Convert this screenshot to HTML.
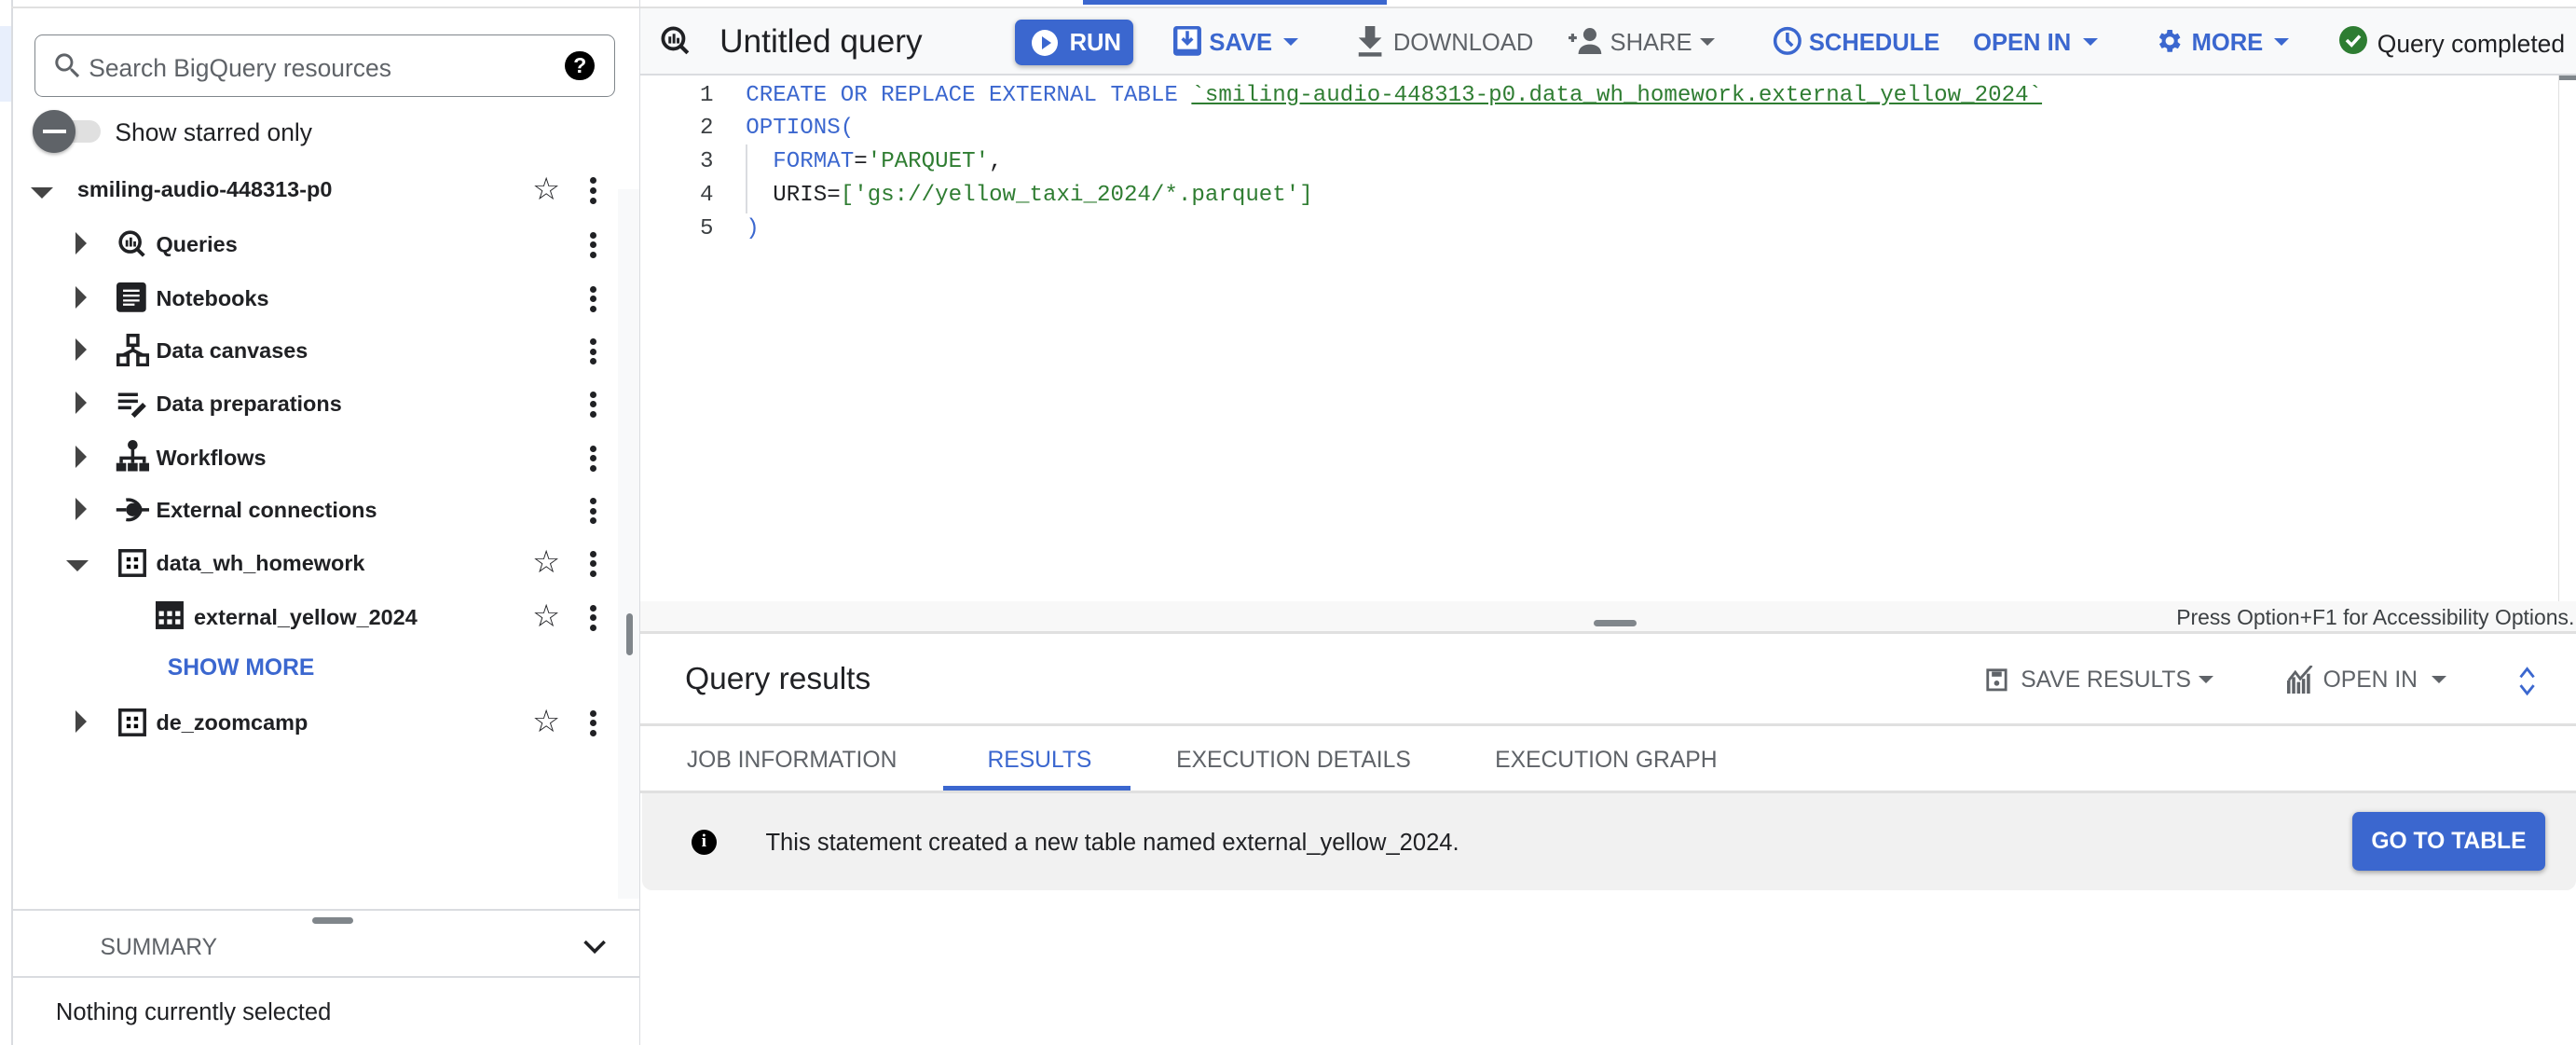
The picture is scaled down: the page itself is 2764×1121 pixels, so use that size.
<!DOCTYPE html>
<html><head><meta charset="utf-8"><style>
html,body{margin:0;padding:0;background:#fff;overflow:hidden}
#w{zoom:1.7628;width:1568px;height:636px;position:relative;font-family:"Liberation Sans",Arial,sans-serif;color:#202124}
.a{position:absolute}
.row{position:absolute;left:0;width:376px;height:32px}
.row .t{position:absolute;top:9px;font-size:13.3px;font-weight:bold;color:#202124;white-space:nowrap}
.dots{position:absolute;left:359px;top:9px;width:4px}
.dots i{display:block;width:4px;height:4px;border-radius:2px;background:#202124;margin-bottom:2px}
.tri{position:absolute;width:0;height:0}
.star{position:absolute;left:324px;top:7px;font-size:19px;line-height:19px;color:#202124}
.tb{position:absolute;top:18px;font-size:14.5px;white-space:nowrap}
.code{font-family:"Liberation Mono",monospace;font-size:13.7px;position:absolute;left:454px;white-space:pre;line-height:20.3px}
.ln{font-family:"Liberation Mono",monospace;font-size:13.7px;position:absolute;left:426px;color:#3c4043;line-height:20.3px}
.k{color:#3b67cf}.s{color:#2f7d32}
</style></head><body><div id="w">
<div class="a" style="left:0;top:0;width:7px;height:636px;background:#fff"></div>
<div class="a" style="left:0;top:16px;width:7px;height:46px;background:#e8effc"></div>
<div class="a" style="left:7px;top:0;width:1px;height:636px;background:#dadce0"></div>
<div class="a" style="left:7px;top:4px;width:1561px;height:1px;background:#e0e0e0"></div>
<div class="a" style="left:389px;top:0;width:1px;height:636px;background:#dadce0"></div>
<div class="a" style="left:376px;top:115px;width:13px;height:432px;background:#f8f9fa"></div>
<div class="a" style="left:381px;top:373px;width:4px;height:26px;border-radius:2px;background:#80868b"></div>

<div class="a" style="left:21px;top:21px;width:352px;height:37px;border:1px solid #80868b;border-radius:5px"></div>
<svg class="a" style="left:31px;top:30px" width="20" height="20" viewBox="0 0 24 24"><path fill="#5f6368" d="M15.5 14h-.8l-.3-.3A6.5 6.5 0 1 0 9.5 16a6.5 6.5 0 0 0 4.2-1.6l.3.3v.8l5 5 1.5-1.5-5-5zm-6 0A4.5 4.5 0 1 1 14 9.5 4.5 4.5 0 0 1 9.5 14z"/></svg>
<div class="a" style="left:54px;top:33px;font-size:15px;color:#5f6368">Search BigQuery resources</div>
<div class="a" style="left:344px;top:31px;width:18px;height:18px;border-radius:9px;background:#000;color:#fff;font-size:13px;font-weight:bold;text-align:center;line-height:18px">?</div>

<div class="a" style="left:29px;top:73px;width:32px;height:14px;border-radius:7px;background:#e0e0e0"></div>
<div class="a" style="left:20px;top:67px;width:26px;height:26px;border-radius:13px;background:#5f6368;box-shadow:0 1px 2px rgba(0,0,0,.3)"></div>
<div class="a" style="left:26px;top:79px;width:14px;height:2px;background:#fff"></div>
<div class="a" style="left:70px;top:72px;font-size:15px;color:#202124">Show starred only</div>

<div class="row" style="top:99px"><div class="tri" style="left:19px;top:15px;border-left:7px solid transparent;border-right:7px solid transparent;border-top:7px solid #444"></div><div class="t" style="left:47px">smiling-audio-448313-p0</div><div class="star">☆</div><div class="dots"><i></i><i></i><i></i></div></div>

<div class="row" style="top:132px"><div class="tri" style="left:46px;top:9px;border-top:7px solid transparent;border-bottom:7px solid transparent;border-left:7px solid #444"></div>
<svg class="a" style="left:71px;top:7px" width="19" height="19" viewBox="0 0 24 24"><circle cx="10.5" cy="10.5" r="7.5" fill="none" stroke="#202124" stroke-width="2.6"/><path d="M16 16l5 5" stroke="#202124" stroke-width="2.8"/><rect x="7" y="9" width="2" height="5" fill="#202124"/><rect x="10" y="7" width="2" height="7" fill="#202124"/><rect x="13" y="10" width="2" height="4" fill="#202124"/></svg>
<div class="t" style="left:95px">Queries</div><div class="dots"><i></i><i></i><i></i></div></div>

<div class="row" style="top:165px"><div class="tri" style="left:46px;top:9px;border-top:7px solid transparent;border-bottom:7px solid transparent;border-left:7px solid #444"></div>
<svg class="a" style="left:71px;top:7px" width="18" height="18" viewBox="0 0 18 18"><rect x="0" y="0" width="18" height="18" rx="2" fill="#202124"/><path d="M4 5h10M4 8h10M4 11h10M4 13.5h7" stroke="#fff" stroke-width="1.3"/></svg>
<div class="t" style="left:95px">Notebooks</div><div class="dots"><i></i><i></i><i></i></div></div>

<div class="row" style="top:197px"><div class="tri" style="left:46px;top:9px;border-top:7px solid transparent;border-bottom:7px solid transparent;border-left:7px solid #444"></div>
<svg class="a" style="left:71px;top:6px" width="20" height="20" viewBox="0 0 20 20" fill="none" stroke="#202124" stroke-width="2"><rect x="7" y="1" width="6" height="6"/><rect x="1" y="13" width="6" height="6"/><rect x="13" y="13" width="6" height="6"/><path d="M10 7v3l-6 3M10 10l6 3"/></svg>
<div class="t" style="left:95px">Data canvases</div><div class="dots"><i></i><i></i><i></i></div></div>

<div class="row" style="top:229px"><div class="tri" style="left:46px;top:9px;border-top:7px solid transparent;border-bottom:7px solid transparent;border-left:7px solid #444"></div>
<svg class="a" style="left:71px;top:8px" width="20" height="18" viewBox="0 0 20 18"><path d="M1 3h12M1 7h12M1 11h8" stroke="#202124" stroke-width="2"/><path d="M10 16l7-7" stroke="#202124" stroke-width="3"/></svg>
<div class="t" style="left:95px">Data preparations</div><div class="dots"><i></i><i></i><i></i></div></div>

<div class="row" style="top:262px"><div class="tri" style="left:46px;top:9px;border-top:7px solid transparent;border-bottom:7px solid transparent;border-left:7px solid #444"></div>
<svg class="a" style="left:70px;top:6px" width="22" height="20" viewBox="0 0 22 20"><circle cx="11" cy="3" r="3" fill="#202124"/><path d="M11 5v6M4 14v-3h14v3M11 11v3" stroke="#202124" stroke-width="2" fill="none"/><rect x="1" y="14" width="6" height="5" fill="#202124"/><rect x="8" y="14" width="6" height="5" fill="#202124"/><rect x="15" y="14" width="6" height="5" fill="#202124"/></svg>
<div class="t" style="left:95px">Workflows</div><div class="dots"><i></i><i></i><i></i></div></div>

<div class="row" style="top:294px"><div class="tri" style="left:46px;top:9px;border-top:7px solid transparent;border-bottom:7px solid transparent;border-left:7px solid #444"></div>
<svg class="a" style="left:70px;top:7px" width="22" height="18" viewBox="0 0 22 18"><path d="M1 9h6M15 9h6" stroke="#202124" stroke-width="2"/><circle cx="11" cy="9" r="4" fill="#202124"/><path d="M7 3a8 8 0 0 1 9 6a8 8 0 0 1-9 6" stroke="#202124" stroke-width="2" fill="none"/></svg>
<div class="t" style="left:95px">External connections</div><div class="dots"><i></i><i></i><i></i></div></div>

<div class="row" style="top:326px"><div class="tri" style="left:40px;top:15px;border-left:7px solid transparent;border-right:7px solid transparent;border-top:7px solid #444"></div>
<svg class="a" style="left:72px;top:8px" width="17" height="17" viewBox="0 0 17 17"><rect x="1" y="1" width="15" height="15" fill="none" stroke="#202124" stroke-width="2"/><rect x="5" y="5" width="2.5" height="2.5"/><rect x="9.5" y="5" width="2.5" height="2.5"/><rect x="5" y="9.5" width="2.5" height="2.5"/><rect x="9.5" y="9.5" width="2.5" height="2.5"/></svg>
<div class="t" style="left:95px">data_wh_homework</div><div class="star">☆</div><div class="dots"><i></i><i></i><i></i></div></div>

<div class="row" style="top:359px">
<svg class="a" style="left:95px;top:7px" width="17" height="17" viewBox="0 0 17 17"><rect x="0" y="0" width="17" height="17" fill="#202124"/><g fill="#fff"><rect x="2" y="6" width="3" height="3"/><rect x="7" y="6" width="3" height="3"/><rect x="12" y="6" width="3" height="3"/><rect x="2" y="11" width="3" height="3"/><rect x="7" y="11" width="3" height="3"/><rect x="12" y="11" width="3" height="3"/></g></svg>
<div class="t" style="left:118px">external_yellow_2024</div><div class="star">☆</div><div class="dots"><i></i><i></i><i></i></div></div>

<div class="a" style="left:102px;top:399px;font-size:14px;font-weight:bold;color:#3b67cf">SHOW MORE</div>

<div class="row" style="top:423px"><div class="tri" style="left:46px;top:9px;border-top:7px solid transparent;border-bottom:7px solid transparent;border-left:7px solid #444"></div>
<svg class="a" style="left:72px;top:8px" width="17" height="17" viewBox="0 0 17 17"><rect x="1" y="1" width="15" height="15" fill="none" stroke="#202124" stroke-width="2"/><rect x="5" y="5" width="2.5" height="2.5"/><rect x="9.5" y="5" width="2.5" height="2.5"/><rect x="5" y="9.5" width="2.5" height="2.5"/><rect x="9.5" y="9.5" width="2.5" height="2.5"/></svg>
<div class="t" style="left:95px">de_zoomcamp</div><div class="star">☆</div><div class="dots"><i></i><i></i><i></i></div></div>

<div class="a" style="left:8px;top:553px;width:381px;height:1px;background:#dadce0"></div>
<div class="a" style="left:190px;top:558px;width:25px;height:4px;border-radius:2px;background:#80868b"></div>
<div class="a" style="left:61px;top:569px;font-size:14px;color:#5f6368">SUMMARY</div>
<svg class="a" style="left:354px;top:569px" width="16" height="14" viewBox="0 0 16 14"><path d="M2 4l6 6 6-6" stroke="#202124" stroke-width="2" fill="none"/></svg>
<div class="a" style="left:8px;top:594px;width:381px;height:1px;background:#dadce0"></div>
<div class="a" style="left:34px;top:608px;font-size:14.5px;color:#202124">Nothing currently selected</div>

<div class="a" style="left:390px;top:5px;width:1178px;height:40px;background:#f8f9fa"></div>
<div class="a" style="left:659px;top:0;width:185px;height:3px;background:#3b67cf"></div>
<div class="a" style="left:390px;top:45px;width:1178px;height:1px;background:#dadce0"></div>
<svg class="a" style="left:401px;top:15px" width="20" height="20" viewBox="0 0 24 24"><circle cx="10.5" cy="10.5" r="7.5" fill="none" stroke="#202124" stroke-width="2.6"/><path d="M16 16l5 5" stroke="#202124" stroke-width="2.8"/><rect x="7" y="9" width="2" height="5" fill="#202124"/><rect x="10" y="7" width="2" height="7" fill="#202124"/><rect x="13" y="10" width="2" height="4" fill="#202124"/></svg>
<div class="a" style="left:438px;top:14px;font-size:20px;color:#202124">Untitled query</div>
<div class="a" style="left:618px;top:12px;width:72px;height:28px;border-radius:4px;background:#3b67cf;box-shadow:0 1px 3px rgba(0,0,0,.3)"></div>
<div class="a" style="left:628px;top:18px;width:16px;height:16px;border-radius:8px;background:#fff"></div>
<div class="a" style="left:634px;top:22px;border-top:4px solid transparent;border-bottom:4px solid transparent;border-left:6px solid #3b67cf"></div>
<div class="tb" style="left:651px;color:#fff;font-weight:bold">RUN</div>
<svg class="a" style="left:714px;top:16px" width="17" height="18" viewBox="0 0 17 18"><rect x="0" y="0" width="17" height="18" rx="2" fill="#3b67cf"/><rect x="2.5" y="2" width="12" height="12" fill="#fff"/><path d="M8.5 3v7M5.5 7.5l3 3 3-3" stroke="#3b67cf" stroke-width="2" fill="none"/></svg>
<div class="tb" style="left:736px;color:#3b67cf;font-weight:bold">SAVE</div>
<div class="a" style="left:781px;top:23px;border-left:5px solid transparent;border-right:5px solid transparent;border-top:5px solid #3b67cf"></div>
<svg class="a" style="left:826px;top:16px" width="16" height="19" viewBox="0 0 16 19"><path d="M5 0h6v7h4l-7 7-7-7h4z" fill="#5f6368"/><rect x="1" y="16" width="14" height="2.5" fill="#5f6368"/></svg>
<div class="tb" style="left:848px;color:#5f6368">DOWNLOAD</div>
<svg class="a" style="left:955px;top:17px" width="20" height="16" viewBox="0 0 20 16"><path d="M0 6h5M2.5 3.5v5" stroke="#5f6368" stroke-width="1.8"/><circle cx="13" cy="4" r="4" fill="#5f6368"/><path d="M6 16c0-4 3-6 7-6s7 2 7 6z" fill="#5f6368"/></svg>
<div class="tb" style="left:980px;color:#5f6368">SHARE</div>
<div class="a" style="left:1035px;top:23px;border-left:5px solid transparent;border-right:5px solid transparent;border-top:5px solid #5f6368"></div>
<svg class="a" style="left:1079px;top:16px" width="18" height="18" viewBox="0 0 18 18"><circle cx="9" cy="9" r="7.5" fill="none" stroke="#3b67cf" stroke-width="2"/><path d="M9 4v5l3 3" stroke="#3b67cf" stroke-width="2" fill="none"/></svg>
<div class="tb" style="left:1101px;color:#3b67cf;font-weight:bold">SCHEDULE</div>
<div class="tb" style="left:1201px;color:#3b67cf;font-weight:bold">OPEN IN</div>
<div class="a" style="left:1268px;top:23px;border-left:5px solid transparent;border-right:5px solid transparent;border-top:5px solid #3b67cf"></div>
<svg class="a" style="left:1311px;top:16px" width="18" height="18" viewBox="0 0 24 24"><path fill="#3b67cf" d="M19.4 13a7.5 7.5 0 0 0 0-2l2.1-1.6-2-3.5-2.5 1a7.3 7.3 0 0 0-1.7-1L15 3h-4l-.4 2.7a7.3 7.3 0 0 0-1.7 1l-2.5-1-2 3.5L6.6 11a7.5 7.5 0 0 0 0 2l-2.1 1.6 2 3.5 2.5-1a7.3 7.3 0 0 0 1.7 1L11 21h4l.4-2.7a7.3 7.3 0 0 0 1.7-1l2.5 1 2-3.5zM13 15.5a3.5 3.5 0 1 1 0-7 3.5 3.5 0 0 1 0 7z"/></svg>
<div class="tb" style="left:1334px;color:#3b67cf;font-weight:bold">MORE</div>
<div class="a" style="left:1384px;top:23px;border-left:5px solid transparent;border-right:5px solid transparent;border-top:5px solid #3b67cf"></div>
<svg class="a" style="left:1424px;top:16px" width="17" height="17" viewBox="0 0 17 17"><circle cx="8.5" cy="8.5" r="8.5" fill="#2e7d32"/><path d="M4.5 8.5l3 3 5-5.5" stroke="#fff" stroke-width="2" fill="none"/></svg>
<div class="tb" style="left:1447px;color:#202124;font-size:15px">Query completed</div>

<div class="ln" style="top:48px">1<br>2<br>3<br>4<br>5</div>
<div class="a" style="left:454px;top:88px;width:1px;height:42px;background:#dadce0"></div>
<div class="code" style="top:48px"><span class="k">CREATE OR REPLACE EXTERNAL TABLE</span> <span class="s" style="text-decoration:underline">`smiling-audio-448313-p0.data_wh_homework.external_yellow_2024`</span>
<span class="k">OPTIONS(</span>
  <span class="k">FORMAT</span>=<span class="s">'PARQUET'</span>,
  URIS=<span class="s">['gs://yellow_taxi_2024/*.parquet']</span>
<span class="k">)</span></div>
<div class="a" style="left:1557px;top:46px;width:1px;height:320px;background:#e0e0e0"></div>
<div class="a" style="left:1558px;top:46px;width:10px;height:3px;background:#80868b"></div>
<div class="a" style="left:390px;top:366px;width:1178px;height:19px;background:#f8f8f8"></div>
<div class="a" style="left:970px;top:377px;width:26px;height:4px;border-radius:2px;background:#80868b"></div>
<div class="a" style="right:1px;top:368px;font-size:13px;color:#3c4043">Press Option+F1 for Accessibility Options.</div>
<div class="a" style="left:390px;top:384px;width:1178px;height:2px;background:#e0e0e0"></div>

<div class="a" style="left:417px;top:403px;font-size:19px;color:#202124">Query results</div>
<svg class="a" style="left:1209px;top:407px" width="13" height="14" viewBox="0 0 13 14"><rect x="1" y="1" width="11" height="12" fill="none" stroke="#5f6368" stroke-width="1.6"/><rect x="3.5" y="2" width="6" height="3" fill="#5f6368"/><circle cx="6.5" cy="9" r="1.6" fill="#5f6368"/></svg>
<div class="tb" style="left:1230px;top:406px;color:#5f6368;font-size:14px">SAVE RESULTS</div>
<div class="a" style="left:1338px;top:411px;border-left:5px solid transparent;border-right:5px solid transparent;border-top:5px solid #5f6368"></div>
<svg class="a" style="left:1392px;top:405px" width="17" height="17" viewBox="0 0 17 17"><path d="M1 17V9M4 17V7M7 17V10M10 17V8M13 17V5" stroke="#5f6368" stroke-width="2"/><path d="M1 9l4-5 3 4 7-8" stroke="#5f6368" stroke-width="1.6" fill="none"/></svg>
<div class="tb" style="left:1414px;top:406px;color:#5f6368;font-size:14px">OPEN IN</div>
<div class="a" style="left:1480px;top:411px;border-left:5px solid transparent;border-right:5px solid transparent;border-top:5px solid #5f6368"></div>
<svg class="a" style="left:1532px;top:405px" width="12" height="19" viewBox="0 0 12 19"><path d="M2 7l4-5 4 5M2 12l4 5 4-5" stroke="#3b67cf" stroke-width="1.6" fill="none"/></svg>
<div class="a" style="left:390px;top:440px;width:1178px;height:2px;background:#e0e0e0"></div>
<div class="tb" style="left:418px;top:455px;color:#5f6368;font-size:14px">JOB INFORMATION</div>
<div class="tb" style="left:601px;top:455px;color:#3b67cf;font-size:14px">RESULTS</div>
<div class="a" style="left:574px;top:478px;width:114px;height:3px;background:#3b67cf"></div>
<div class="tb" style="left:716px;top:455px;color:#5f6368;font-size:14px">EXECUTION DETAILS</div>
<div class="tb" style="left:910px;top:455px;color:#5f6368;font-size:14px">EXECUTION GRAPH</div>
<div class="a" style="left:390px;top:481px;width:1178px;height:2px;background:#e0e0e0"></div>
<div class="a" style="left:391px;top:483px;width:1177px;height:59px;background:#f1f1f1;border-radius:0 0 6px 6px"></div>
<div class="a" style="left:421px;top:505px;width:15px;height:15px;border-radius:8px;background:#000;color:#fff;font-size:11px;font-weight:bold;text-align:center;line-height:15px;font-family:'Liberation Serif',serif">i</div>
<div class="a" style="left:466px;top:505px;font-size:14.5px;color:#202124">This statement created a new table named external_yellow_2024.</div>
<div class="a" style="left:1432px;top:494px;width:117px;height:36px;border-radius:4px;background:#3b67cf;box-shadow:0 1px 3px rgba(0,0,0,.35);color:#fff;font-size:14px;font-weight:bold;text-align:center;line-height:36px">GO TO TABLE</div>
</div></body></html>
